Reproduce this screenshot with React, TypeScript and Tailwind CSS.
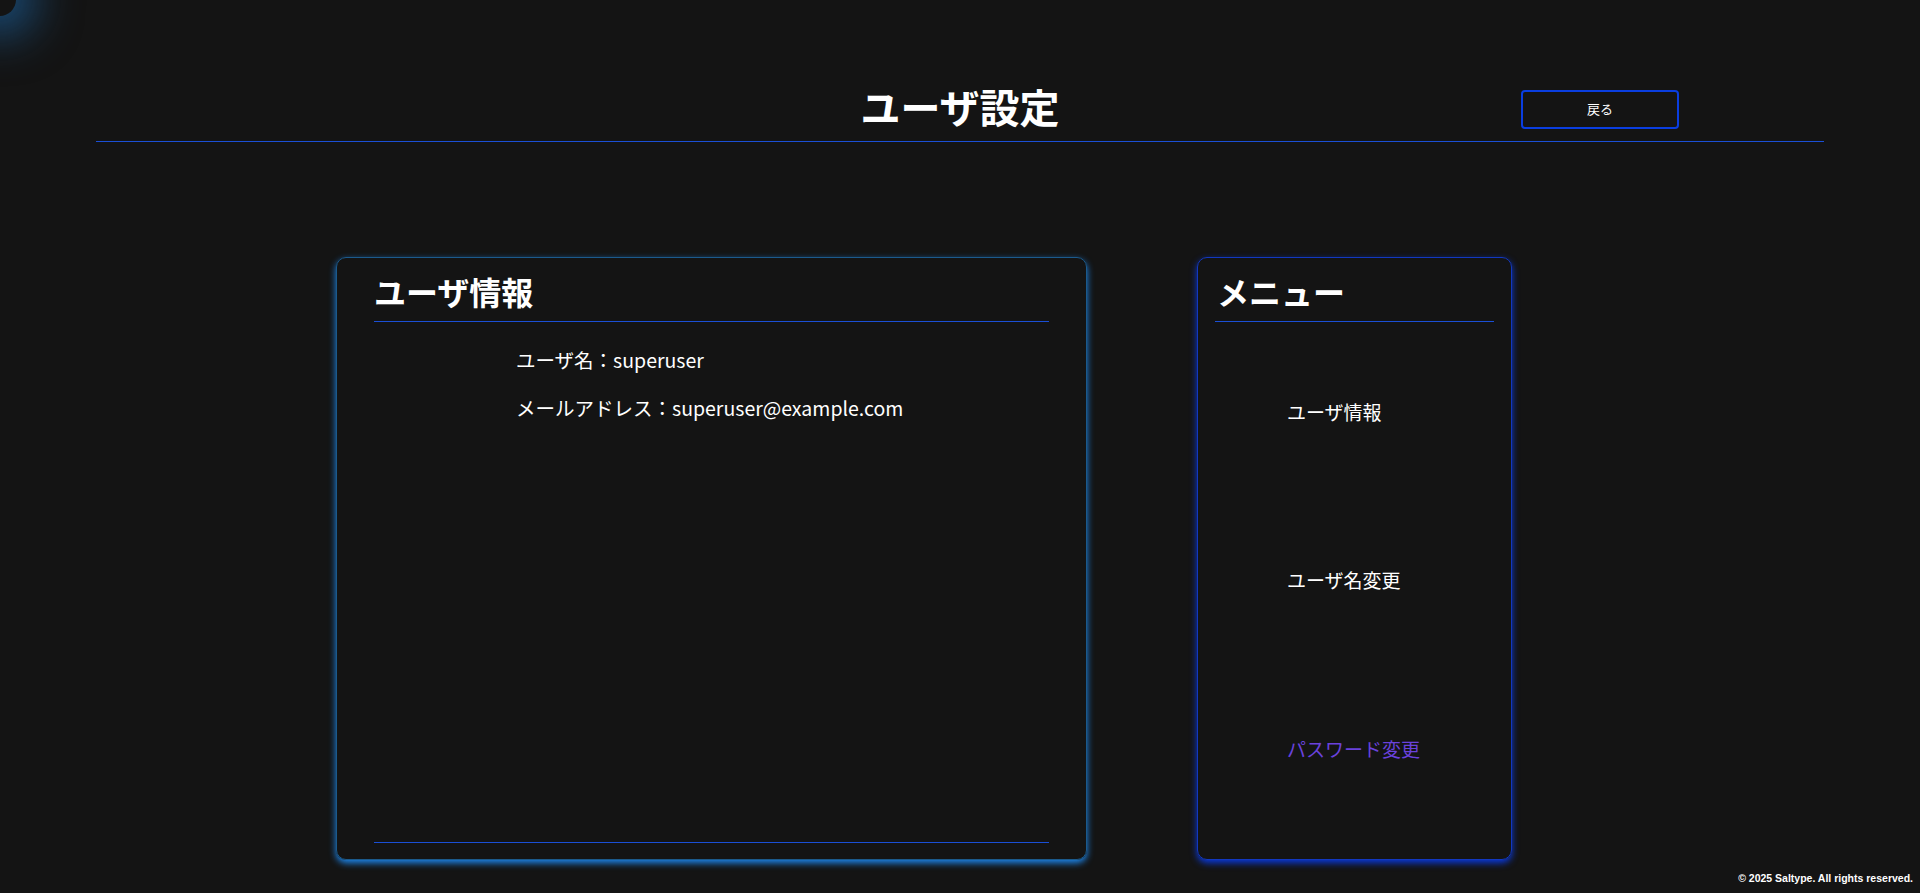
import React from "react";

const jp = { fontFamily: '"Noto Sans CJK JP", "Noto Sans", sans-serif' };

export default function App() {
  return (
    <div className="relative min-h-[893px] w-full overflow-hidden bg-[#141414] text-white" style={jp}>
      <div className="pointer-events-none absolute left-[-17px] top-[-17px] h-[33px] w-[33px] rounded-full bg-[#141414] shadow-[0_0_45px_20px_rgba(30,115,190,0.6)]" />

      <header className="mx-auto grid w-[90%] grid-cols-[1fr_auto_1fr] items-center border-b border-[#1a4fd6] pt-[76px] pb-[5px]">
        <div />
        <h1 className="text-[40px] font-bold leading-[60px]">ユーザ設定</h1>
        <div className="flex justify-end pr-[145px]">
          <button className="mt-[6px] h-[39px] w-[158px] rounded-[4px] border-2 border-[#0a3ee0] text-[13px] text-white">
            戻る
          </button>
        </div>
      </header>

      <main className="flex items-start gap-[110px] pl-[336px] pt-[115px]">
        <section className="flex h-[603px] w-[751px] flex-col rounded-[10px] border border-[#1b5a8c] px-[37px] pb-[16px] shadow-[0_3px_7px_rgba(30,144,255,0.95)]">
          <h2 className="border-b border-[#1a4fd6] pt-[12px] pb-[9px] text-[32px] font-bold leading-[42px]">ユーザ情報</h2>
          <div className="flex-1 border-b border-[#1a4fd6] pl-[142px] pt-[24px] text-[19.5px] leading-[28px]">
            <p>ユーザ名：superuser</p>
            <p className="mt-[20px]">メールアドレス：superuser@example.com</p>
          </div>
        </section>

        <section className="flex h-[603px] w-[315px] flex-col rounded-[10px] border border-[#1238c0] px-[17px] pb-[26px] shadow-[0_3px_7px_rgba(10,60,235,0.95)]">
          <h2 className="border-b border-[#1a4fd6] pl-[2px] pt-[12px] pb-[9px] text-[32px] font-bold leading-[42px]">メニュー</h2>
          <ul className="flex flex-1 flex-col justify-around pl-[72px] pt-[6px] text-[19px] leading-[28px]">
            <li>ユーザ情報</li>
            <li>ユーザ名変更</li>
            <li className="text-[#6a42dc]">パスワード変更</li>
          </ul>
        </section>
      </main>

      <footer className="absolute bottom-[6px] right-[7px] text-[10.5px] font-semibold text-white" style={{ fontFamily: '"Liberation Sans", Arial, sans-serif' }}>
        © 2025 Saltype. All rights reserved.
      </footer>
    </div>
  );
}
